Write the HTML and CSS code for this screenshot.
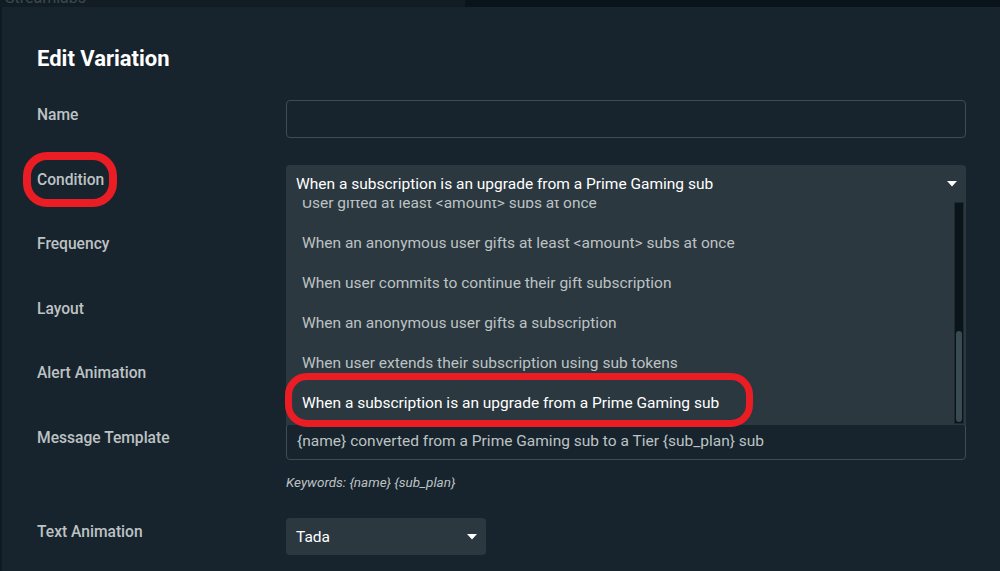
FILE: index.html
```html
<!DOCTYPE html>
<html lang="en">
<head>
<meta charset="utf-8">
<title>Edit Variation</title>
<link rel="stylesheet" href="styles.css">
</head>
<body>
<div class="topbar">
  <div class="topbar-left"><span class="brand">Streamlabs</span></div>
  <div class="topbar-right"></div>
</div>
<div class="main">
  <div class="side-strip"></div>
  <div class="dialog">
    <h1 class="title">Edit Variation</h1>
    <div class="form">
      <div class="label">Name</div>
      <div class="control"><div class="input"></div></div>

      <div class="label"><span class="ring-label">Condition</span></div>
      <div class="control">
        <div class="select-open">
          <div class="select-head">
            <span>When a subscription is an upgrade from a Prime Gaming sub</span>
            <svg class="caret" width="10" height="6" viewBox="0 0 10 6"><path d="M0 0 L10 0 L5 5.5 Z" fill="#fff"/></svg>
          </div>
          <div class="dropdown">
            <div class="options">
              <div class="option">User gifted at least &lt;amount&gt; subs at once</div>
              <div class="option">When an anonymous user gifts at least &lt;amount&gt; subs at once</div>
              <div class="option">When user commits to continue their gift subscription</div>
              <div class="option">When an anonymous user gifts a subscription</div>
              <div class="option">When user extends their subscription using sub tokens</div>
              <div class="option selected">When a subscription is an upgrade from a Prime Gaming sub</div>
            </div>
            <div class="scroll-track"><div class="scroll-thumb"></div></div>
          </div>
          <div class="ring-option"></div>
        </div>
      </div>

      <div class="label">Frequency</div>
      <div class="control"></div>

      <div class="label">Layout</div>
      <div class="control"></div>

      <div class="label">Alert Animation</div>
      <div class="control"></div>

      <div class="label">Message Template</div>
      <div class="control">
        <div class="input text">{name} converted from a Prime Gaming sub to a Tier {sub_plan} sub</div>
        <div class="keywords">Keywords: {name} {sub_plan}</div>
      </div>

      <div class="label">Text Animation</div>
      <div class="control">
        <div class="select-small">
          <span>Tada</span>
          <svg class="caret" width="10" height="6" viewBox="0 0 10 6"><path d="M0 0 L10 0 L5 5.5 Z" fill="#fff"/></svg>
        </div>
      </div>
    </div>
  </div>
</div>
</body>
</html>
```

FILE: styles.css
```css
*, *::before, *::after { box-sizing: border-box; }
html, body {
  margin: 0;
  padding: 0;
  width: 1000px;
  height: 571px;
  overflow: hidden;
  background: #09161d;
  font-family: Roboto, "Liberation Sans", sans-serif;
}
.topbar {
  display: flex;
  height: 7px;
  overflow: hidden;
}
.topbar-left {
  width: 465px;
  background: #111c23;
  padding-left: 5px;
}
.topbar-right {
  flex: 1;
  background: #09141a;
}
.brand {
  display: block;
  margin-top: -10px;
  font-size: 16px;
  line-height: 16px;
  color: #3d4950;
}
.main {
  display: flex;
  height: 564px;
}
.side-strip {
  width: 2px;
  background: #0e1a21;
}
.dialog {
  flex: 1;
  background: #17242d;
  padding: 39px 0 0 35px;
}
.title {
  margin: 0 0 29px 0;
  font-size: 22px;
  line-height: 25px;
  font-weight: 700;
  color: #ffffff;
}
.form {
  display: grid;
  grid-template-columns: 249px 680px;
  grid-auto-rows: auto;
  row-gap: 26.5px;
}
.label {
  padding-top: 5px;
  font-size: 15.6px;
  line-height: 20px;
  font-weight: 500;
  color: #bdc2c4;
  min-height: 38px;
}
.control {
  min-height: 38px;
  position: relative;
}
.input {
  height: 38px;
  border: 1px solid #3f4c54;
  border-radius: 4px;
}
.input.text {
  height: 37px;
  padding: 0 10px;
  font-size: 15.5px;
  line-height: 35px;
  color: #bdc2c4;
  white-space: nowrap;
}
.keywords {
  margin-top: 13px;
  font-size: 13.5px;
  line-height: 18px;
  font-style: italic;
  color: #bdc2c4;
}
.ring-label {
  position: relative;
  display: inline-block;
}
.ring-label::after {
  content: "";
  position: absolute;
  left: -14px;
  top: -18px;
  width: 94px;
  height: 55px;
  border: 8px solid #ea1d25;
  border-radius: 24px;
}
.select-open {
  position: relative;
  z-index: 2;
}
.select-head {
  height: 35px;
  background: #2b383f;
  border-radius: 4px 4px 0 0;
  display: flex;
  align-items: center;
  justify-content: space-between;
  padding: 3px 9px 0 10px;
  font-size: 15.5px;
  color: #ffffff;
}
.dropdown {
  position: absolute;
  left: 0;
  top: 35px;
  width: 680px;
  height: 225px;
  background: #2b383f;
  overflow: hidden;
}
.options {
  margin-top: -17px;
}
.option {
  height: 40px;
  line-height: 40px;
  padding-left: 16px;
  font-size: 15.5px;
  color: #bdc2c4;
  white-space: nowrap;
}
.option.selected {
  color: #ffffff;
}
.scroll-track {
  position: absolute;
  right: 2px;
  top: 2px;
  bottom: 1px;
  width: 10px;
  background: #0a1419;
  border: 1px solid #1c2a31;
}
.scroll-thumb {
  position: absolute;
  left: 1px;
  right: 1px;
  bottom: 1px;
  height: 91px;
  background: #3a4a53;
  border-radius: 3px;
}
.ring-option {
  position: absolute;
  left: -1px;
  top: 208px;
  width: 468px;
  height: 54px;
  border: 7px solid #ea1d25;
  border-radius: 22px;
}
.select-small {
  width: 200px;
  height: 37px;
  margin-top: 1px;
  background: #2b383f;
  border-radius: 4px;
  display: flex;
  align-items: center;
  justify-content: space-between;
  padding: 0 9px 0 10px;
  font-size: 15.5px;
  color: #ffffff;
}
.caret {
  display: block;
}
```
